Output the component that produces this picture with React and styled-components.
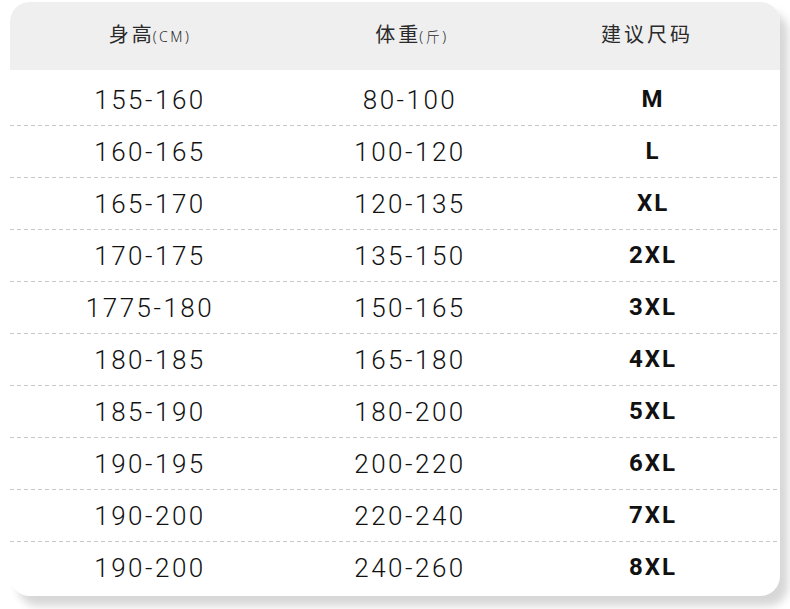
import React from 'react';
import styled, { createGlobalStyle } from 'styled-components';

const rows = [
  ['155-160', '80-100', 'M'],
  ['160-165', '100-120', 'L'],
  ['165-170', '120-135', 'XL'],
  ['170-175', '135-150', '2XL'],
  ['1775-180', '150-165', '3XL'],
  ['180-185', '165-180', '4XL'],
  ['185-190', '180-200', '5XL'],
  ['190-195', '200-220', '6XL'],
  ['190-200', '220-240', '7XL'],
  ['190-200', '240-260', '8XL'],
];

export default function App() {
  return (
    <Page>
      <GlobalStyle />
      <Card>
        <Header>
          <HeadCell>身高<Unit>(CM)</Unit></HeadCell>
          <HeadCell $shift={2}>体重<Unit>(斤)</Unit></HeadCell>
          <HeadCell $shift={-8}>建议尺码</HeadCell>
        </Header>
        <Body>
          {rows.map((r, i) => (
            <Row key={i} $first={i === 0}>
              <Num>{r[0]}</Num>
              <Num>{r[1]}</Num>
              <Size>{r[2]}</Size>
            </Row>
          ))}
        </Body>
      </Card>
    </Page>
  );
}

const GlobalStyle = createGlobalStyle`
  html, body {
    margin: 0;
    padding: 0;
    background: #fff;
    overflow: hidden;
  }
`;

const Page = styled.div`
  width: 790px;
  height: 609px;
  padding: 2px 0 0 10px;
  box-sizing: border-box;
`;

const Card = styled.div`
  width: 770px;
  height: 594px;
  background: #fff;
  border-radius: 20px;
  overflow: hidden;
  box-shadow: 8px 10px 8px rgba(0, 0, 0, 0.16);
  display: flex;
  flex-direction: column;
`;

const Header = styled.div`
  height: 68px;
  background: #efefef;
  display: grid;
  grid-template-columns: 280px 240px 1fr;
  align-items: center;
`;

const HeadCell = styled.div`
  text-align: center;
  font-family: "Noto Sans CJK SC", "Noto Sans", sans-serif;
  font-weight: 400;
  font-size: 20px;
  color: #2a2a2a;
  letter-spacing: 3px;
  padding-bottom: 5px;
  transform: translateX(${(p) => p.$shift || 0}px);
`;

const Unit = styled.span`
  font-family: "Noto Sans", "Noto Sans CJK SC", sans-serif;
  font-weight: 300;
  font-size: 14px;
  letter-spacing: 2.5px;
  margin-left: -2px;
`;

const Body = styled.div`
  padding: 3px 0;
`;

const Row = styled.div`
  height: 52px;
  display: grid;
  grid-template-columns: 280px 240px 1fr;
  align-items: center;
  background-image: ${(p) =>
    p.$first
      ? 'none'
      : 'repeating-linear-gradient(to right, #c8c8c8 0 4px, transparent 4px 7px)'};
  background-size: 100% 1px;
  background-repeat: no-repeat;
  background-position: 0 0;
`;

const Num = styled.div`
  text-align: center;
  font-family: Roboto, "Noto Sans", sans-serif;
  font-weight: 300;
  font-size: 26px;
  letter-spacing: 2.5px;
  color: #111;
  padding-top: 1px;
`;

const Size = styled.div`
  text-align: center;
  font-family: Roboto, "Noto Sans", sans-serif;
  font-weight: 700;
  font-size: 24px;
  letter-spacing: 2px;
  color: #111;
  padding-right: 4px;
`;
